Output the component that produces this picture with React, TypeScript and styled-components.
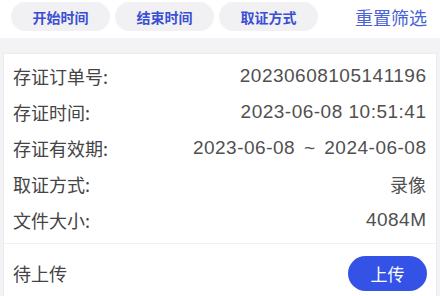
import React from 'react';
import styled, { createGlobalStyle } from 'styled-components';

const GlobalStyle = createGlobalStyle`
  html, body {
    margin: 0;
    padding: 0;
    background: #f3f3f5;
    font-family: "Liberation Sans", "Noto Sans CJK SC", sans-serif;
  }
`;

const Page = styled.div`
  width: 440px;
  height: 296px;
  overflow: hidden;
  background: #f3f3f5;
`;

const FilterBar = styled.div`
  height: 38px;
  background: #ffffff;
  display: flex;
  align-items: flex-start;
  padding: 2px 13px 0 11px;
  box-sizing: border-box;
  gap: 5px;
`;

const FilterPill = styled.button`
  width: 99px;
  height: 29px;
  border: none;
  border-radius: 15px;
  background: #f1f1f3;
  color: #3b4fd3;
  font-family: "Noto Sans CJK SC", sans-serif;
  font-size: 14px;
  font-weight: 700;
  padding: 0;
`;

const ResetLink = styled.span`
  margin-left: auto;
  margin-top: 2px;
  color: #4b62d6;
  font-family: "Noto Sans CJK SC", sans-serif;
  font-size: 18px;
  line-height: 26px;
`;

const Card = styled.div`
  margin: 15px 3px 0;
  background: #ffffff;
  border: 1px solid #ececec;
  border-bottom: none;
`;

const InfoList = styled.div`
  padding: 4px 10px 5px 9px;
  border-bottom: 1px solid #f0f0f0;
`;

const InfoRow = styled.div`
  height: 36px;
  display: flex;
  align-items: center;
  justify-content: space-between;
`;

const Label = styled.span`
  color: #444444;
  font-family: "Noto Sans CJK SC", sans-serif;
  font-size: 18px;
`;

const Value = styled.span<{ $cjk?: boolean }>`
  color: #505050;
  font-family: ${p => (p.$cjk ? '"Noto Sans CJK SC", sans-serif' : '"Liberation Sans", sans-serif')};
  font-size: ${p => (p.$cjk ? '18px' : '19px')};
  letter-spacing: ${p => (p.$cjk ? '0' : '0.5px')};
  margin-right: ${p => (p.$cjk ? '0' : '-0.5px')};
`;

const Tilde = styled.span`
  margin: 0 3px;
`;

const Footer = styled.div`
  height: 60px;
  display: flex;
  align-items: flex-start;
  justify-content: space-between;
  padding: 12px 9px 0 9px;
  box-sizing: border-box;
`;

const Status = styled.span`
  color: #444444;
  font-family: "Noto Sans CJK SC", sans-serif;
  font-size: 18px;
  line-height: 35px;
`;

const UploadButton = styled.button`
  width: 79px;
  height: 35px;
  border: none;
  border-radius: 18px;
  background: #3453e6;
  color: #ffffff;
  font-family: "Noto Sans CJK SC", sans-serif;
  font-size: 17px;
  padding: 0;
`;

const rows = [
  { label: '存证订单号:', value: '20230608105141196', cjk: false },
  { label: '存证时间:', value: '2023-06-08 10:51:41', cjk: false },
  { label: '存证有效期:', value: '2023-06-08 ~ 2024-06-08', cjk: false },
  { label: '取证方式:', value: '录像', cjk: true },
  { label: '文件大小:', value: '4084M', cjk: false },
];

const renderValue = (v: string) => {
  const parts = v.split(' ~ ');
  if (parts.length < 2) return v;
  return (
    <>
      {parts[0]} <Tilde>~</Tilde> {parts[1]}
    </>
  );
};

export default function App() {
  return (
    <Page>
      <GlobalStyle />
      <FilterBar>
        <FilterPill>开始时间</FilterPill>
        <FilterPill>结束时间</FilterPill>
        <FilterPill>取证方式</FilterPill>
        <ResetLink>重置筛选</ResetLink>
      </FilterBar>
      <Card>
        <InfoList>
          {rows.map(r => (
            <InfoRow key={r.label}>
              <Label>{r.label}</Label>
              <Value $cjk={r.cjk}>{renderValue(r.value)}</Value>
            </InfoRow>
          ))}
        </InfoList>
        <Footer>
          <Status>待上传</Status>
          <UploadButton>上传</UploadButton>
        </Footer>
      </Card>
    </Page>
  );
}
